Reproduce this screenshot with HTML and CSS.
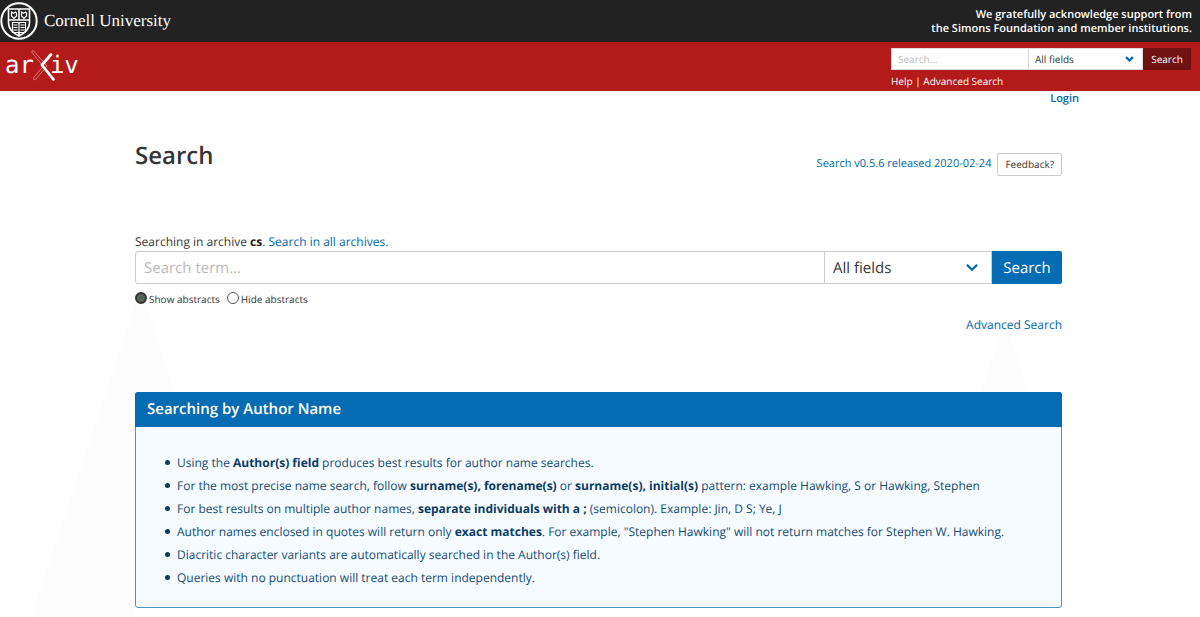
FILE: index.html
```html
<!DOCTYPE html>
<html lang="en">
<head>
    <meta charset="UTF-8">
    <meta name="viewport" content="width=device-width, initial-scale=1.0">
    <title>Search | arXiv e-print repository</title>
    <link rel="stylesheet" href="styles.css">
</head>
<body>
    <header>
        <div class="attribution">
            <a class="cornell" href="#">
                <svg class="seal" viewBox="0 0 38 38" fill="none" stroke="#fff">
                    <circle cx="19" cy="19" r="17.7" stroke-width="2"/>
                    <path d="M8.500 7h21v14c0 6-4.500 10-10.500 13C13 31 8.500 27 8.500 21z" stroke-width="1.600"/>
                    <path d="M8.500 18h21M19 7v11M19 31v3" stroke-width="1.600"/>
                    <path d="M11.500 10l2 1.200 2-1.200 1 1v3L14 16.500 11.500 14zM21.500 10l2 1.200 2-1.200 1 1v3L24 16.500 21.500 14z" stroke-width="1.200"/>
                    <path d="M12.500 20.500H18l1 1 1-1h5.500v10H20l-1 1-1-1h-5.500zM19 21v10M13.500 23h4M13.500 25.500h4M13.500 28h4M20.500 23h4M20.500 25.500h4M20.500 28h4" stroke-width="1.200"/>
                </svg>
                <span class="cornell-name">Cornell University</span>
            </a>
            <p class="support">We gratefully acknowledge support from<br>the Simons Foundation and member institutions.</p>
        </div>
        <div class="identity">
            <a class="arxiv" href="#" aria-label="arXiv">
                <span>ar</span>
                <svg class="arxiv-x" viewBox="0 0 26 34" fill="none" stroke-linecap="round">
                    <path d="M3 4.500C2 2.500 4 2 5.200 3.500L18 18 7 31c-1.500 1.500-3.500.5-2.200-1.500L14 18.500z" stroke="#e58f8f" stroke-width=".8"/>
                    <path d="M22 6.500L13 17l11.500 14.500" stroke="#fff" stroke-width="2.800" stroke-linejoin="round"/>
                </svg>
                <span>iv</span>
            </a>
            <form class="mini-search">
                <div class="mini-fields">
                    <input class="mini-input" type="text" placeholder="Search..." aria-label="Search term or terms">
                    <div class="select mini-select">
                        <select aria-label="Field to search">
                            <option>All fields</option>
                            <option>Title</option>
                            <option>Author</option>
                            <option>Abstract</option>
                        </select>
                        <svg class="chevron" viewBox="0 0 12 8"><path d="M1.500 1.500L6 6l4.500-4.500"/></svg>
                    </div>
                    <button class="mini-button" type="submit">Search</button>
                </div>
                <p class="mini-links"><a href="#">Help</a> | <a href="#">Advanced Search</a></p>
            </form>
        </div>
        <div class="user-tools"><a href="#">Login</a></div>
    </header>

    <main>
        <svg class="backdrop" viewBox="0 0 1000 330">
            <path d="M110 0L0 330h104V110h41zM974 35l-26 75h52z"/>
        </svg>
        <div class="title-row">
            <h1>Search</h1>
            <div class="release">
                <a href="#">Search v0.5.6 released 2020-02-24</a>
                <button class="feedback" type="button">Feedback?</button>
            </div>
        </div>

        <form class="search">
            <label class="archive" for="query">Searching in archive <strong>cs</strong>. <a href="#">Search in all archives.</a></label>
            <div class="search-fields">
                <input class="search-input" id="query" type="text" placeholder="Search term...">
                <div class="select search-select">
                    <select aria-label="Field to search">
                        <option>All fields</option>
                        <option>Title</option>
                        <option>Author(s)</option>
                        <option>Abstract</option>
                    </select>
                    <svg class="chevron" viewBox="0 0 12 8"><path d="M1.500 1.500L6 6l4.500-4.500"/></svg>
                </div>
                <button class="search-button" type="submit">Search</button>
            </div>
            <div class="abstracts">
                <label><input type="radio" name="abstracts" value="show" checked>Show abstracts</label>
                <label><input type="radio" name="abstracts" value="hide">Hide abstracts</label>
            </div>
            <p class="advanced"><a href="#">Advanced Search</a></p>
        </form>

        <section class="message">
            <h2>Searching by Author Name</h2>
            <ul>
                <li>Using the <strong>Author(s) field</strong> produces best results for author name searches.</li>
                <li>For the most precise name search, follow <strong>surname(s), forename(s)</strong> or <strong>surname(s), initial(s)</strong> pattern: example Hawking, S or Hawking, Stephen</li>
                <li>For best results on multiple author names, <strong>separate individuals with a ;</strong> (semicolon). Example: Jin, D S; Ye, J</li>
                <li>Author names enclosed in quotes will return only <strong>exact matches</strong>. For example, "Stephen Hawking" will not return matches for Stephen W. Hawking.</li>
                <li>Diacritic character variants are automatically searched in the Author(s) field.</li>
                <li>Queries with no punctuation will treat each term independently.</li>
            </ul>
        </section>
    </main>
</body>
</html>
```
FILE: styles.css
```css
* {
    margin: 0;
    padding: 0;
    box-sizing: border-box;
}

body {
    font-family: "Open Sans", "Noto Sans", sans-serif;
    font-size: 12px;
    line-height: 18px;
    color: #363636;
    background-color: #fff;
    text-rendering: geometricPrecision;
}

a {
    color: #0068ac;
    text-decoration: none;
}

input,
select,
button {
    font: inherit;
    color: inherit;
    text-rendering: inherit;
}

/* header */
.attribution {
    display: flex;
    justify-content: space-between;
    align-items: center;
    height: 42px;
    padding-right: 8px;
    background-color: #222;
    color: #fff;
}

.cornell {
    display: flex;
    align-items: center;
    gap: 6px;
    color: #fff;
}

.seal {
    width: 38px;
    height: 38px;
}

.cornell-name {
    font-family: "Liberation Serif", serif;
    font-size: 17px;
}

.support {
    padding-top: 2px;
    font-size: 11px;
    font-weight: 600;
    line-height: 14px;
    text-align: right;
}

.identity {
    display: flex;
    justify-content: space-between;
    align-items: flex-start;
    height: 49px;
    padding: 6px 9px 0 5px;
    background-color: #b31b1b;
    color: #fff;
}

.arxiv {
    display: flex;
    align-items: center;
    font-family: "DejaVu Sans Mono", monospace;
    font-size: 24px;
    line-height: 34px;
    color: #fff;
}

.arxiv-x {
    width: 26px;
    height: 34px;
    margin: 0 -5px;
}

.mini-search {
    width: 300px;
    font-size: 10px;
}

.mini-fields {
    display: flex;
    height: 22px;
}

.mini-input {
    width: 138px;
    padding: 0 6px;
    border: 1px solid #dbdbdb;
    background-color: #fff;
}

.mini-select {
    flex: 1;
}

.mini-button {
    width: 48px;
    border: 0;
    background-color: #701112;
    color: #fff;
}

.mini-links {
    padding-top: 2px;
}

.mini-links a {
    color: #fff;
}

.user-tools {
    padding-right: 121px;
    font-size: 11px;
    line-height: 16px;
    font-weight: 600;
    text-align: right;
}

::placeholder {
    color: #bbb;
    opacity: 1;
}

.select {
    display: grid;
    align-items: center;
}

.select select {
    grid-area: 1 / 1;
    width: 100%;
    height: 100%;
    padding: 0 6px;
    border: 1px solid #dbdbdb;
    border-left: 0;
    background-color: #fff;
    color: #363636;
    appearance: none;
}

.chevron {
    grid-area: 1 / 1;
    justify-self: end;
    width: 9px;
    height: 6px;
    margin-right: 9px;
    fill: none;
    stroke: #0068ac;
    stroke-width: 3;
    pointer-events: none;
}

/* page */
main {
    position: relative;
    padding: 24px 138px 9px 135px;
}

/* faint shapes behind the form and the message */
.backdrop {
    position: absolute;
    z-index: -1;
    left: 31px;
    bottom: 0;
    width: 1000px;
    height: 330px;
    fill: #fcfcfc;
}

.title-row {
    display: flex;
    justify-content: space-between;
    align-items: center;
    height: 50px;
}

h1 {
    font-size: 24px;
    font-weight: 600;
    line-height: 32px;
}

.release {
    display: flex;
    align-items: center;
    gap: 6px;
    padding-top: 16px;
    font-size: 11px;
}

.feedback {
    height: 23px;
    padding: 0 7px;
    border: 1px solid #ccc;
    border-radius: 2px;
    background-color: #fff;
    font-size: 10px;
}

.search {
    padding-top: 52px;
}

.archive {
    display: block;
}

.archive strong {
    color: #222;
}

.search-fields {
    display: flex;
    height: 33px;
    font-size: 15px;
}

.search-input {
    flex: 1;
    min-width: 0;
    padding: 0 8px;
    border: 1px solid #ccc;
    border-radius: 3px 0 0 3px;
    background-color: #fff;
}

.search-select {
    width: 167px;
}

.search-select select {
    padding: 0 8px;
    border-color: #ccc;
}

.search-select .chevron {
    width: 14px;
    height: 9px;
    margin-right: 13px;
    stroke-width: 2;
}

.search-button {
    width: 70px;
    border: 0;
    border-radius: 0 2px 2px 0;
    background-color: #056cb3;
    color: #fff;
}

.abstracts {
    display: flex;
    gap: 7px;
    padding-top: 5px;
    font-size: 10px;
    line-height: 20px;
}

.abstracts label {
    display: flex;
    gap: 2px;
}

.abstracts input {
    width: 12px;
    height: 12px;
    margin-top: 3px;
    border: 1px solid #555;
    border-radius: 50%;
    background-color: #fff;
    appearance: none;
}

.abstracts input:checked {
    border: 2px solid #333;
    background-color: #566356;
}

.advanced {
    padding-top: 7px;
    text-align: right;
}

.message {
    margin-top: 58px;
    border: 1px solid #4a96ca;
    border-radius: 3px;
    background-color: #f6fbff;
    color: #144b76;
}

.message h2 {
    margin: -1px -1px 0;
    padding: 7px 12px;
    border-radius: 3px 3px 0 0;
    background-color: #056cb3;
    color: #fff;
    font-size: 15px;
    font-weight: 600;
    line-height: 21px;
}

.message ul {
    padding: 27px 12px 20px 41px;
    list-style: none;
}

.message li {
    margin-bottom: 5px;
}

.message li::before {
    content: "";
    display: inline-block;
    width: 5px;
    height: 5px;
    margin-left: -12px;
    margin-right: 7px;
    border-radius: 50%;
    background-color: #0a3c66;
    vertical-align: 2px;
}

.message li:last-child {
    margin-bottom: 0;
}

.message strong {
    color: #0a3c66;
}
```
